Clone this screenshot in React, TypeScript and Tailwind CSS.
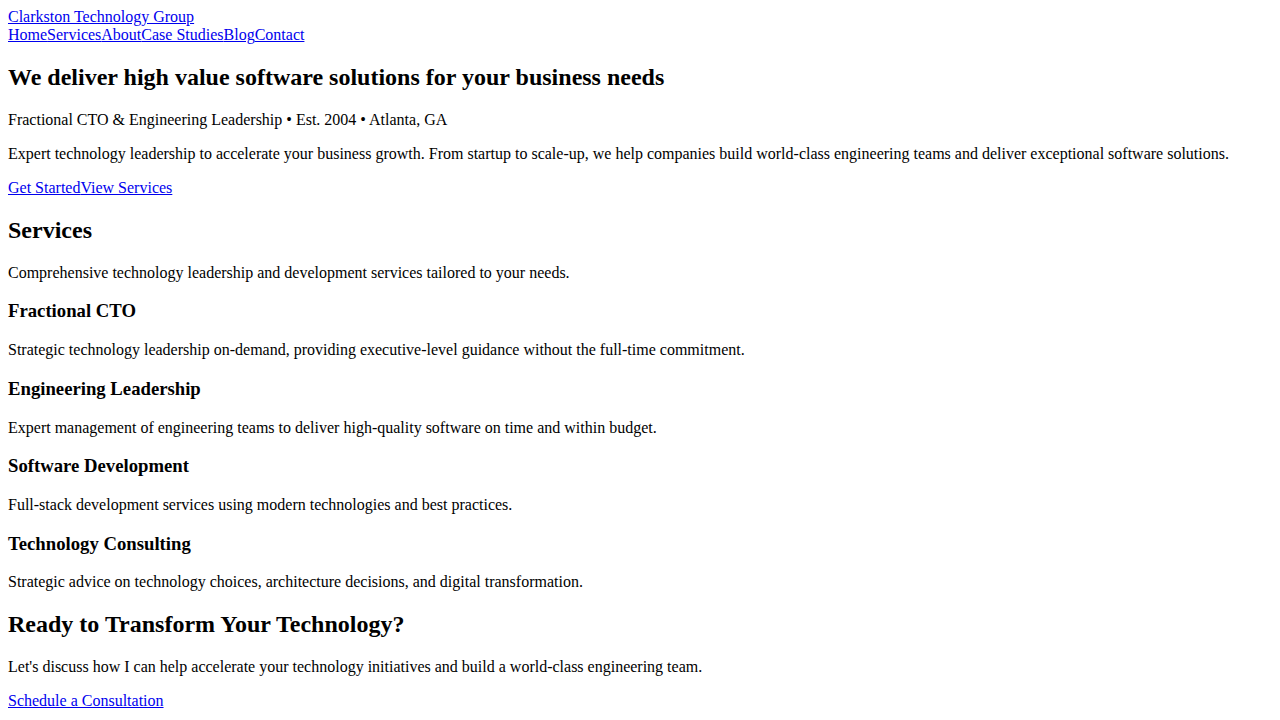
const linkCls = "text-[#0000EE] underline"

const services = [
  {
    title: "Fractional CTO",
    body: "Strategic technology leadership on-demand, providing executive-level guidance without the full-time commitment.",
  },
  {
    title: "Engineering Leadership",
    body: "Expert management of engineering teams to deliver high-quality software on time and within budget.",
  },
  {
    title: "Software Development",
    body: "Full-stack development services using modern technologies and best practices.",
  },
  {
    title: "Technology Consulting",
    body: "Strategic advice on technology choices, architecture decisions, and digital transformation.",
  },
]

const navItems = ["Home", "Services", "About", "Case Studies", "Blog", "Contact"]

export default function App() {
  return (
    <div className="p-2 font-['Liberation_Serif',serif] text-[16px] leading-[normal] text-black bg-white">
      <header>
        <div>
          <a href="#" className={linkCls}>Clarkston Technology Group</a>
        </div>
        <nav className="flex">
          {navItems.map((item) => (
            <a key={item} href="#" className={linkCls}>{item}</a>
          ))}
        </nav>
      </header>

      <main>
        {/* Hero */}
        <section>
          <h1 className="my-[19.92px] text-[24px] font-bold leading-[normal]">
            We deliver high value software solutions for your business needs
          </h1>
          <p className="my-4">Fractional CTO &amp; Engineering Leadership • Est. 2004 • Atlanta, GA</p>
          <p className="my-4">
            Expert technology leadership to accelerate your business growth. From startup to scale-up, we help companies build world-class engineering teams and deliver exceptional software solutions.
          </p>
          <div className="my-4 flex">
            <a href="#" className={linkCls}>Get Started</a>
            <a href="#" className={linkCls}>View Services</a>
          </div>
        </section>

        {/* Services */}
        <section>
          <h2 className="my-[19.92px] text-[24px] font-bold leading-[normal]">Services</h2>
          <p className="my-4">Comprehensive technology leadership and development services tailored to your needs.</p>
          {services.map((s) => (
            <div key={s.title}>
              <h3 className="my-[18.72px] text-[18.72px] font-bold leading-[normal]">{s.title}</h3>
              <p className="my-4">{s.body}</p>
            </div>
          ))}
        </section>

        {/* CTA */}
        <section>
          <h2 className="my-[19.92px] text-[24px] font-bold leading-[normal]">Ready to Transform Your Technology?</h2>
          <p className="my-4">
            Let's discuss how I can help accelerate your technology initiatives and build a world-class engineering team.
          </p>
          <p className="my-4">
            <a href="#" className={linkCls}>Schedule a Consultation</a>
          </p>
        </section>
      </main>
    </div>
  )
}
